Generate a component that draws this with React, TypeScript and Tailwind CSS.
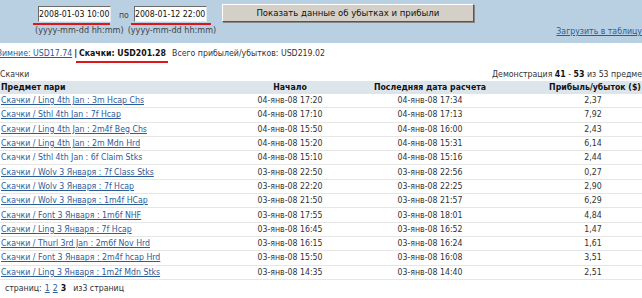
import React from 'react'

type Row = {
  event: string
  start: string
  settled: string
  profit: string
  plain?: boolean
}

const rows: Row[] = [
  { event: 'Скачки / Ling 4th Jan : 3m Hcap Chs', start: '04-янв-08 17:20', settled: '04-янв-08 17:34', profit: '2,37' },
  { event: 'Скачки / Sthl 4th Jan : 7f Hcap', start: '04-янв-08 17:10', settled: '04-янв-08 17:13', profit: '7,92' },
  { event: 'Скачки / Ling 4th Jan : 2m4f Beg Chs', start: '04-янв-08 15:50', settled: '04-янв-08 16:00', profit: '2,43' },
  { event: 'Скачки / Ling 4th Jan : 2m Mdn Hrd', start: '04-янв-08 15:20', settled: '04-янв-08 15:31', profit: '6,14' },
  { event: 'Скачки / Sthl 4th Jan : 6f Claim Stks', start: '04-янв-08 15:10', settled: '04-янв-08 15:16', profit: '2,44', plain: true },
  { event: 'Скачки / Wolv 3 Января : 7f Class Stks', start: '03-янв-08 22:50', settled: '03-янв-08 22:56', profit: '0,27' },
  { event: 'Скачки / Wolv 3 Января : 7f Hcap', start: '03-янв-08 22:20', settled: '03-янв-08 22:25', profit: '2,90' },
  { event: 'Скачки / Wolv 3 Января : 1m4f HCap', start: '03-янв-08 21:50', settled: '03-янв-08 21:57', profit: '6,29' },
  { event: 'Скачки / Font 3 Января : 1m6f NHF', start: '03-янв-08 17:55', settled: '03-янв-08 18:01', profit: '4,84' },
  { event: 'Скачки / Ling 3 Января : 7f Hcap', start: '03-янв-08 16:45', settled: '03-янв-08 16:52', profit: '1,47' },
  { event: 'Скачки / Thurl 3rd Jan : 2m6f Nov Hrd', start: '03-янв-08 16:15', settled: '03-янв-08 16:24', profit: '1,61' },
  { event: 'Скачки / Font 3 Января : 2m4f hcap Hrd', start: '03-янв-08 15:50', settled: '03-янв-08 16:08', profit: '3,51' },
  { event: 'Скачки / Ling 3 Января : 1m2f Mdn Stks', start: '03-янв-08 14:35', settled: '03-янв-08 14:40', profit: '2,51' },
]

const DateField = ({ value, underline }: { value: string; underline: string }) => (
  <div className="flex flex-col">
    <div className="h-[16px] w-[73px] overflow-hidden whitespace-nowrap border-t border-l border-t-[#6b6b6b] border-l-[#6b6b6b] border-b border-r border-b-[#e8e8e8] border-r-[#e8e8e8] bg-white leading-[15px] text-[#111]">
      {value}
    </div>
    <div className={`mt-[1px] h-[2px] bg-[#e0141b] ${underline}`} />
  </div>
)

const App: React.FC = () => {
  return (
    <div className="h-[298px] w-[642px] overflow-hidden bg-white font-['DejaVu_Sans_Condensed','Liberation_Sans',sans-serif] text-[8.7px] text-[#333]">
      {/* filter band */}
      <div className="h-[43px] bg-[#b9cfe2] pt-[6px]">
        <div className="flex items-start">
          <div className="ml-[38px]">
            <DateField value="2008-01-03 10:00" underline="-ml-[5px] w-[77px]" />
          </div>
          <span className="ml-[8px] mt-[3px] text-[#444]">по</span>
          <div className="ml-[5px]">
            <DateField value="2008-01-12 22:00" underline="-ml-[3px] w-[80px]" />
          </div>
          <button className="ml-[11px] -mt-[2px] h-[18px] w-[252px] border border-t-white border-l-white border-b-[#555] border-r-[#555] bg-[#d4d0c8] text-center text-[9.5px] text-[#111] shadow-[1px_1px_0_#888]">
            Показать данные об убытках и прибыли
          </button>
        </div>
        <div className="flex items-start whitespace-nowrap text-[9px] leading-[11px]">
          <span className="ml-[35px] w-[97px] text-[#444]">(yyyy-mm-dd hh:mm)</span>
          <span className="w-[96px] text-[#444]">(yyyy-mm-dd hh:mm)</span>
          <a className="ml-[337px] mt-[1px] text-[8.7px] text-[#2d5c9a] underline">Загрузить в таблицу</a>
        </div>
      </div>

      {/* totals */}
      <div className="mt-[4px] flex h-[14px] items-start whitespace-nowrap">
        <a className="-ml-[3px] text-[#2d5c9a] underline">Зимние: USD17.74</a>
        <span className="mx-[2px] font-bold text-[#111]">|</span>
        <div className="flex flex-col">
          <span className="font-bold text-[#111]">Скачки: USD201.28</span>
          <div className="-ml-[3px] mt-[1px] h-[2px] w-[92px] bg-[#e0141b]" />
        </div>
        <span className="ml-[4px]">Всего прибылей/убытков: USD219.02</span>
      </div>

      {/* table */}
      <div className="mt-[8px] w-[656px]">
        <div className="flex h-[12px] items-center justify-between whitespace-nowrap">
          <span>Скачки</span>
          <span>
            Демонстрация <b className="text-[#111]">41</b> - <b className="text-[#111]">53</b> из 53 предметов
          </span>
        </div>
        <div className="grid h-[13px] grid-cols-[250px_80px_200px_130px] items-center whitespace-nowrap bg-[#dde5ec] font-bold text-[#111]">
          <span className="pl-[1px]">Предмет пари</span>
          <span className="text-center">Начало</span>
          <span className="text-center">Последняя дата расчета</span>
          <span className="text-center">Прибыль/убыток ($)</span>
        </div>
        {rows.map((r) => (
          <div
            key={r.event}
            className="grid h-[14.3px] grid-cols-[250px_80px_200px_126px] items-center whitespace-nowrap border-b border-[#e6e6e6]"
          >
            <a className={`pl-[1px] text-[#2d5c9a] ${r.plain ? '' : 'underline'}`}>{r.event}</a>
            <span className="text-center">{r.start}</span>
            <span className="text-center">{r.settled}</span>
            <span className="text-center">{r.profit}</span>
          </div>
        ))}
        <div className="ml-[5px] mt-[2px] flex gap-[3px]">
          <span>страниц:</span>
          <a className="text-[#2d5c9a] underline">1</a>
          <a className="text-[#2d5c9a] underline">2</a>
          <b className="text-[#111]">3</b>
          <span className="ml-[4px]">из3 страниц</span>
        </div>
      </div>
    </div>
  )
}

export default App
